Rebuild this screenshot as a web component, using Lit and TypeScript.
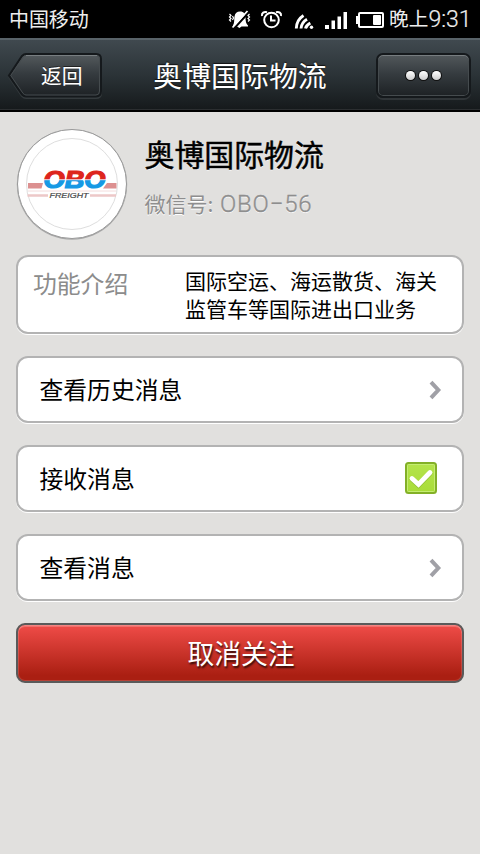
import { LitElement, html, css } from "lit";
import { customElement } from "lit/decorators.js";

const chevron = html`<svg class="chevron" width="14" height="20" viewBox="0 0 14 20">
  <path d="M2 2.2L9.300 10L2 17.8" fill="none" stroke="#a0a0a6" stroke-width="4" />
</svg>`;

@customElement("status-bar")
class StatusBar extends LitElement {
  static styles = css`
    :host { display: flex; height: 38px; background: #000; color: #eee;
      font: 20px/38px Roboto, "Noto Sans CJK SC", sans-serif; box-sizing: border-box; padding: 1px 6px 0 9px; align-items: center; }
    .carrier { flex: 1; letter-spacing: -0.1px; }
    .icons { display: block; flex: none; margin-top: -1px; }
    .time { display: flex; width: 85px; margin-left: 5px; }
    .half { font-size: 19.7px; line-height: 40px; }
    .clock { font-size: 23px; font-weight: 300; letter-spacing: 0; line-height: 40px; -webkit-text-stroke: 0.2px #eee; }
  `;
  render() {
    return html`
      <span class="carrier">中国移动</span>
      <svg class="icons" width="156" height="38" viewBox="228 0 156 38" fill="#fff">
        <path d="M233 25.500C234.500 23 234 20 234.500 16.500C235 13 237 11.500 240 11.500C244 11.500 245.500 14 245.500 17C245.500 21 246 24 248 25.500V26.500H241.500L239.500 28L237 26.500H233Z" />
        <path d="M249.500 11.500L234 28.500" stroke="#000" stroke-width="2.200" />
        <path d="M247.500 11L232.500 27.500" stroke="#fff" stroke-width="1.800" />
        <path d="M229.500 14l1.500 1.500l-1.500 1.500l1.500 1.500l-1.500 1.500l1.500 1.500M232.500 16l1 2l-1 2M249.500 14l-1.500 1.500l1.500 1.500l-1.500 1.500l1.500 1.500l-1.500 1.500" fill="none" stroke="#fff" stroke-width="1.200" />
        <circle cx="271.500" cy="20" r="7.300" fill="none" stroke="#fff" stroke-width="2" />
        <path d="M271 15.500V20.500H275.500M262 16C261.500 13 264 11.300 267 12.200M281 16C281.500 13 279 11.300 276 12.200" fill="none" stroke="#fff" stroke-width="2" />
        <circle cx="311.500" cy="27.300" r="1.700" />
        <path d="M296.300 28.500Q296.500 20 303.500 15.500M301 28.500Q301.500 22.500 307 19.300M305.500 28.500Q306 25.500 310.300 23" fill="none" stroke="#fff" stroke-width="2.900" />
        <path d="M325 25h4v4h-4zM331.500 20.500h3.500v8.500h-3.500zM337.500 16.500h3.500v12.500h-3.500zM343.500 12h3.500v17h-3.500z" />
        <rect x="359" y="13" width="24" height="14" rx="1" fill="none" stroke="#fff" stroke-width="2" />
        <rect x="356" y="16" width="3" height="8" />
        <rect x="373" y="15" width="8" height="10" rx="1" />
      </svg>
      <span class="time"><span class="half">晚上</span><span class="clock">9:31</span></span>`;
  }
}

@customElement("title-bar")
class TitleBar extends LitElement {
  static styles = css`
    :host { display: grid; grid-template-columns: 96px 1fr 96px; height: 74px; box-sizing: border-box;
      padding: 0 9px 0 7px; align-items: start; color: #fff;
      font-family: "Noto Sans CJK SC", sans-serif;
      background: linear-gradient(#40494f, #2b3337 50%, #15191b); border-top: 2px solid #586268; border-bottom: 2px solid #000;
      box-shadow: inset 0 -1px #2b2e30; }
    .back { position: relative; height: 48px; margin-top: 12px; }
    .shape { display: block; }
    .label { position: absolute; left: 34px; top: 0; font-size: 20.8px; line-height: 47px; text-shadow: 0 -1px #222; }
    .title { text-align: center; font-size: 28.9px; line-height: 69px; padding-left: 2px; text-shadow: 0 -1px 1px #111; white-space: nowrap; }
    .more { height: 45px; margin-top: 13px; box-sizing: border-box; border: 2px solid #15191c; border-radius: 7px;
      background: linear-gradient(#52585b, #363c40 45%, #1d2124);
      box-shadow: inset 0 1px #777d80, inset 0 0 0 1px #454b4e, 0 2px #303538;
      display: flex; justify-content: center; align-items: center; gap: 4px; margin-left: 1px; }
    .dot { width: 9px; height: 9px; border-radius: 50%; background: linear-gradient(#fff, #ccc); box-shadow: 0 0 0 1px #111; }
  `;
  render() {
    return html`
      <div class="back">
        <svg class="shape" width="96" height="48" viewBox="7 52 96 48">
          <defs><linearGradient id="g" x1="0" y1="0" x2="0" y2="1">
            <stop offset="0" stop-color="#555b5e" /><stop offset=".45" stop-color="#363c40" /><stop offset="1" stop-color="#1d2124" />
          </linearGradient></defs>
          <path d="M26 56H96Q101 56 101 61V93Q101 98 96 98H26Q24 98 22 96L9 77" fill="none" stroke="#343a3d" stroke-width="2" />
          <path d="M26 54H96Q101 54 101 59V91Q101 96.500 96 96.500H26Q24 96.500 22 94.500L9 75.500L22 56Q24 54 26 54Z" fill="url(#g)" stroke="#15191c" stroke-width="2" />
          <path d="M26 55.500H96Q99.500 55.500 99.500 59V91Q99.500 95 96 95H26Q24.500 95 23 93.300L10.800 75.500L23 57.300Q24 55.500 26 55.500Z" fill="none" stroke="#454b4e" />
          <path d="M26 55.500H97" stroke="#787e81" />
        </svg>
        <span class="label">返回</span>
      </div>
      <div class="title">奥博国际物流</div>
      <div class="more"><i class="dot"></i><i class="dot"></i><i class="dot"></i></div>`;
  }
}

@customElement("app-root")
class AppRoot extends LitElement {
  static styles = css`
    :host { display: block; width: 480px; height: 854px; overflow: hidden; background: #e1e0de;
      font-family: "Noto Sans CJK SC", sans-serif; color: #000; }
    .profile { display: flex; height: 143px; padding: 16px 16px 0; box-sizing: border-box; }
    .avatar { flex: none; width: 112px; height: 112px; }
    .who { margin-left: 16.5px; padding-top: 2px; text-shadow: 0 1px #fff; }
    .name { font-size: 29.9px; line-height: 46px; -webkit-text-stroke: 0.5px #000; }
    .id { display: flex; font-size: 21px; line-height: 30px; margin-top: 12px; color: #8e8e8e; }
    .num { font-family: Roboto, sans-serif; font-weight: 300; font-size: 24px; letter-spacing: 0.8px; padding: 1px 0 0 2px; -webkit-text-stroke: 0.35px #8e8e8e; }
    .cards { display: flex; flex-direction: column; gap: 22px; padding: 0 16px; }
    .card { box-sizing: border-box; height: 67px; border: 2px solid #b3b3b3; border-radius: 12px; background: #fff;
      box-shadow: 0 1px #fff; display: flex; align-items: center; padding: 0 19px 0 21.5px; font-size: 23.8px; line-height: 36px; }
    .text { flex: 1; padding-bottom: 2px; }
    .intro { height: 79px; align-items: flex-start; padding: 9px 15px 0; }
    .key { width: 152px; color: #8c8c8c; line-height: 33px; }
    .desc { font-size: 21px; line-height: 28px; white-space: nowrap; }
    .chevron { display: block; }
    .check { display: block; margin: -1px 6px 0 0; }
    .unfollow { box-sizing: border-box; height: 60px; border: 2px solid #5a5a5a; border-radius: 9px; color: #fff;
      background: linear-gradient(#f04c48, #aa1f12 90%); box-shadow: inset 0 0 0 1px rgba(255,255,255,.15), inset 0 2px rgba(255,255,255,.2);
      text-align: center; font-size: 26.8px; line-height: 55px; padding-left: 2px; text-shadow: 1px 2px 2px rgba(0,0,0,.75); }
    .obo { font: italic 700 23px "Liberation Sans", sans-serif; }
    .freight { font: italic 400 8px "Liberation Sans", sans-serif; }
  `;
  render() {
    return html`
      <status-bar></status-bar>
      <title-bar></title-bar>
      <div class="profile">
        <svg class="avatar" viewBox="16 128 112 112">
          <defs><linearGradient id="split" gradientUnits="userSpaceOnUse" x1="0" y1="171" x2="0" y2="189">
            <stop offset=".44" stop-color="#dd241d" /><stop offset=".48" stop-color="#f0d8e4" /><stop offset=".54" stop-color="#1699e4" />
          </linearGradient></defs>
          <circle cx="72" cy="184.500" r="55.200" fill="#aaa" />
          <circle cx="72" cy="184" r="54.500" fill="#fff" stroke="#999" stroke-width="1" />
          <circle cx="72" cy="184" r="45.500" fill="#fff" stroke="#dedede" />
          <path d="M28 183H43L41.500 188.500H28ZM107 183H116.500V188.500H103Z" fill="#dc9090" />
          <path d="M27.500 195.500H48M90 195.500H116" stroke="#edc8c8" stroke-width="2.500" />
          <path d="M28 191H116" stroke="#f4dcdc" />
          <text class="obo" x="43.500" y="188" textLength="62" lengthAdjust="spacingAndGlyphs" fill="url(#split)" stroke="url(#split)" stroke-width="1.200">OBO</text>
          <text class="freight" x="49.500" y="198.300" textLength="39" lengthAdjust="spacingAndGlyphs" fill="#444" stroke="#444" stroke-width=".2">FREIGHT</text>
        </svg>
        <div class="who">
          <div class="name">奥博国际物流</div>
          <div class="id"><span>微信号:&nbsp;</span><span class="num">OBO−56</span></div>
        </div>
      </div>
      <div class="cards">
        <div class="card intro"><span class="key">功能介绍</span><span class="desc">国际空运、海运散货、海关<br />监管车等国际进出口业务</span></div>
        <div class="card"><span class="text">查看历史消息</span>${chevron}</div>
        <div class="card"><span class="text">接收消息</span>
          <svg class="check" width="32" height="32" viewBox="0 0 32 32">
            <defs><linearGradient id="green" x1="0" y1="0" x2="0" y2="1"><stop offset="0" stop-color="#b5e44c" /><stop offset="1" stop-color="#a8dc38" /></linearGradient></defs>
            <rect x="1" y="1" width="30" height="30" rx="2.500" fill="url(#green)" stroke="#83b027" stroke-width="2" />
            <rect x="2.500" y="2.500" width="27" height="27" rx="1" fill="none" stroke="#c5ed72" />
            <path d="M7 17.500L13.500 23.500L25 11.500" fill="none" stroke="#82ab30" stroke-width="4.800" stroke-linecap="round" opacity=".6" />
            <path d="M7 16.500L13.500 22.500L25 10.500" fill="none" stroke="#fff" stroke-width="4.800" stroke-linecap="round" />
          </svg></div>
        <div class="card"><span class="text">查看消息</span>${chevron}</div>
        <div class="unfollow">取消关注</div>
      </div>`;
  }
}
